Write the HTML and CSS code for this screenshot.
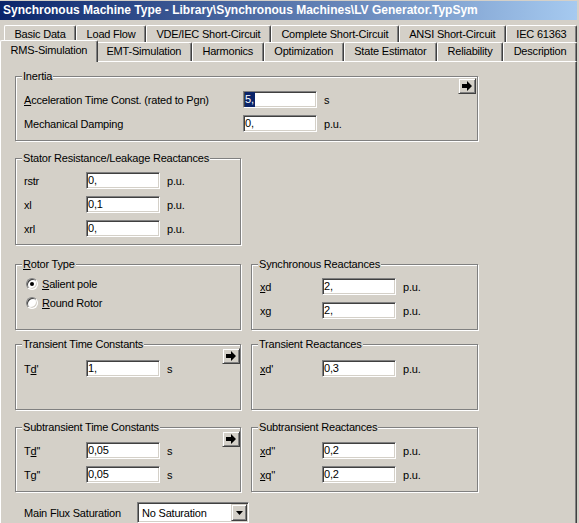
FILE: index.html
```html
<!DOCTYPE html>
<html lang="en">
<head>
    <meta charset="UTF-8">
    <title>Synchronous Machine Type</title>
    <link rel="stylesheet" href="styles.css">
</head>
<body>

<div class="window">
    <div class="titlebar">Synchronous Machine Type - Library\Synchronous Machines\LV Generator.TypSym</div>

    <div class="tabs">
        <div class="tab-row tab-row-back">
            <div class="tab">Basic Data</div>
            <div class="tab">Load Flow</div>
            <div class="tab">VDE/IEC Short-Circuit</div>
            <div class="tab">Complete Short-Circuit</div>
            <div class="tab">ANSI Short-Circuit</div>
            <div class="tab">IEC 61363</div>
        </div>
        <div class="tab-row tab-row-front">
            <div class="tab tab-active">RMS-Simulation</div>
            <div class="tab">EMT-Simulation</div>
            <div class="tab">Harmonics</div>
            <div class="tab">Optimization</div>
            <div class="tab">State Estimator</div>
            <div class="tab">Reliability</div>
            <div class="tab">Description</div>
        </div>
    </div>

    <div class="panel">
        <!-- Inertia -->
        <div class="group group-inertia">
            <span class="group-title">Inertia</span>
            <button class="arrow-btn arrow-btn-top">
                <svg width="11" height="11" viewBox="0 0 11 11"><polygon points="0,3 5,3 5,0 10,5 5,10 5,7 0,7" fill="#000"/></svg>
            </button>
            <div class="field">
                <label><u>A</u>cceleration Time Const. (rated to Pgn)</label>
                <span class="edit"><span class="selected">5,</span></span>
                <span class="unit">s</span>
            </div>
            <div class="field">
                <label>Mechanical Damping</label>
                <span class="edit">0,</span>
                <span class="unit">p.u.</span>
            </div>
        </div>

        <!-- Stator -->
        <div class="group group-stator">
            <span class="group-title">Stator Resistance/Leakage Reactances</span>
            <div class="field">
                <label>rstr</label>
                <span class="edit">0,</span>
                <span class="unit">p.u.</span>
            </div>
            <div class="field">
                <label>xl</label>
                <span class="edit">0,1</span>
                <span class="unit">p.u.</span>
            </div>
            <div class="field">
                <label>xrl</label>
                <span class="edit">0,</span>
                <span class="unit">p.u.</span>
            </div>
        </div>

        <div class="group-pair pair-sync">
            <div class="group group-rotor">
                <span class="group-title"><u>R</u>otor Type</span>
                <div class="radio">
                    <span class="radio-dot checked"></span>
                    <span><u>S</u>alient pole</span>
                </div>
                <div class="radio">
                    <span class="radio-dot"></span>
                    <span><u>R</u>ound Rotor</span>
                </div>
            </div>
            <div class="group group-sync">
                <span class="group-title">Synchronous Reactances</span>
                <div class="field">
                    <label><u>x</u>d</label>
                    <span class="edit">2,</span>
                    <span class="unit">p.u.</span>
                </div>
                <div class="field">
                    <label>xg</label>
                    <span class="edit">2,</span>
                    <span class="unit">p.u.</span>
                </div>
            </div>
        </div>

        <div class="group-pair pair-transient">
            <div class="group group-transient">
                <span class="group-title">Transient Time Constants</span>
                <button class="arrow-btn">
                    <svg width="11" height="11" viewBox="0 0 11 11"><polygon points="0,3 5,3 5,0 10,5 5,10 5,7 0,7" fill="#000"/></svg>
                </button>
                <div class="field">
                    <label>T<u>d</u>'</label>
                    <span class="edit">1,</span>
                    <span class="unit">s</span>
                </div>
            </div>
            <div class="group group-transient">
                <span class="group-title">Transient Reactances</span>
                <div class="field">
                    <label><u>x</u>d'</label>
                    <span class="edit">0,3</span>
                    <span class="unit">p.u.</span>
                </div>
            </div>
        </div>

        <div class="group-pair pair-subtransient">
            <div class="group group-subtransient">
                <span class="group-title">Subtransient Time Constants</span>
                <button class="arrow-btn">
                    <svg width="11" height="11" viewBox="0 0 11 11"><polygon points="0,3 5,3 5,0 10,5 5,10 5,7 0,7" fill="#000"/></svg>
                </button>
                <div class="field">
                    <label>T<u>d</u>''</label>
                    <span class="edit">0,05</span>
                    <span class="unit">s</span>
                </div>
                <div class="field">
                    <label>Tg''</label>
                    <span class="edit">0,05</span>
                    <span class="unit">s</span>
                </div>
            </div>
            <div class="group group-subtransient">
                <span class="group-title">Subtransient Reactances</span>
                <div class="field">
                    <label><u>x</u>d''</label>
                    <span class="edit">0,2</span>
                    <span class="unit">p.u.</span>
                </div>
                <div class="field">
                    <label><u>x</u>q''</label>
                    <span class="edit">0,2</span>
                    <span class="unit">p.u.</span>
                </div>
            </div>
        </div>

        <div class="saturation">
            <label>Main Flux Saturation</label>
            <div class="select">
                <span class="select-text">No Saturation</span>
                <span class="select-btn">
                    <svg width="7" height="4" viewBox="0 0 7 4"><polygon points="0,0 7,0 3.5,4" fill="#000"/></svg>
                </span>
            </div>
        </div>
    </div>
</div>

</body>
</html>
```

FILE: styles.css
```css
body {
    margin: 0;
    background: #d4d0c8;
    font-family: "Liberation Sans", Arial, sans-serif;
    font-size: 11px;
    letter-spacing: -0.2px;
    color: #000;
}

.window {
    width: 577px;
    height: 523px;
    overflow: hidden;
}

.titlebar {
    margin-top: 1px;
    height: 19px;
    line-height: 19px;
    padding-left: 3px;
    background: linear-gradient(to right, #0a246a, #a6caf0);
    color: #fff;
    font-size: 12px;
    font-weight: bold;
    letter-spacing: 0;
    white-space: nowrap;
}

/* Tabs */
.tabs {
    margin-top: 5px;
}

.tab-row {
    display: flex;
}

.tab-row-back {
    margin-left: 4px;
    height: 17px;
}

.tab-row-front {
    margin-left: 2px;
    height: 19px;
}

.tab {
    flex: 1 1 auto;
    padding: 0 4px;
    text-align: center;
    white-space: nowrap;
    line-height: 16px;
    background: #d4d0c8;
    border-top: 1px solid #fff;
    border-left: 1px solid #fff;
    border-right: 1px solid #404040;
    border-radius: 2px 2px 0 0;
    box-shadow: inset -1px 0 #808080;
}

.tab-row-front .tab {
    line-height: 17px;
}

.tab-row-front .tab-active {
    position: relative;
    z-index: 1;
    margin: -2px -2px 0;
    height: 21px;
    line-height: 18px;
}

/* Page */
.panel {
    height: 461px;
    padding: 14px 0 0 14px;
    border-top: 1px solid #fff;
    border-left: 1px solid #fff;
    border-right: 1px solid #404040;
    box-shadow: inset -1px 0 #808080;
}

.group {
    position: relative;
    box-sizing: border-box;
    border: 1px solid #808080;
    box-shadow: inset 1px 1px #fff, 1px 1px #fff;
}

.group-title {
    position: absolute;
    top: -7px;
    left: 6px;
    padding: 0 1px;
    line-height: 13px;
    background: #d4d0c8;
    white-space: nowrap;
}

.group-inertia {
    width: 463px;
    padding: 14px 0 8px 8px;
}

.group-stator {
    width: 226px;
    margin-top: 17px;
    padding: 13px 0 7px 8px;
}

.group-pair {
    display: grid;
    grid-template-columns: 226px 227px;
    column-gap: 10px;
}

.pair-sync {
    margin-top: 19px;
}

.pair-transient {
    margin-top: 14px;
}

.pair-subtransient {
    margin-top: 17px;
}

.group-rotor {
    padding: 11px 0 0 10px;
}

.group-sync {
    padding: 13px 0 10px 8px;
}

.group-transient {
    padding: 15px 0 32px 8px;
}

.group-subtransient {
    padding: 14px 0 8px 8px;
}

.field {
    display: flex;
    align-items: center;
    height: 17px;
}

.field + .field {
    margin-top: 7px;
}

.field label {
    flex: none;
    width: 62px;
}

.group-inertia .field label {
    width: 219px;
}

.edit {
    box-sizing: border-box;
    width: 74px;
    height: 17px;
    padding: 0 1px;
    line-height: 15px;
    background: #fff;
    border: 1px solid;
    border-color: #808080 #fff #fff #808080;
    box-shadow: inset 1px 1px #404040, inset -1px -1px #d4d0c8;
    white-space: nowrap;
}

.edit .selected {
    display: inline-block;
    padding-right: 1px;
    background: #0a246a;
    color: #fff;
}

.unit {
    margin-left: 7px;
}

/* Raised 3D buttons */
.arrow-btn,
.select-btn {
    box-sizing: border-box;
    display: flex;
    align-items: center;
    justify-content: center;
    padding: 0;
    background: #d4d0c8;
    border: 1px solid;
    border-color: #d4d0c8 #404040 #404040 #d4d0c8;
    box-shadow: inset 1px 1px #fff, inset -1px -1px #808080;
}

.arrow-btn {
    position: absolute;
    top: 3px;
    right: 0;
    width: 18px;
    height: 16px;
}

.arrow-btn-top {
    top: 1px;
    right: 1px;
}

/* Radio buttons */
.radio {
    display: flex;
    align-items: center;
    height: 16px;
}

.radio + .radio {
    margin-top: 3px;
}

.radio-dot {
    position: relative;
    box-sizing: border-box;
    width: 12px;
    height: 12px;
    margin-right: 4px;
    border-radius: 50%;
    background: #fff;
    border: 1px solid;
    border-color: #808080 #fff #fff #808080;
    box-shadow: inset 1px 1px #404040, inset -1px -1px #d4d0c8;
}

.radio-dot.checked::after {
    content: "";
    position: absolute;
    left: 3px;
    top: 3px;
    width: 4px;
    height: 4px;
    border-radius: 50%;
    background: #000;
}

/* Saturation dropdown */
.saturation {
    display: flex;
    align-items: center;
    margin-top: 10px;
    padding-left: 9px;
}

.saturation label {
    width: 113px;
}

.select {
    box-sizing: border-box;
    display: flex;
    align-items: center;
    width: 112px;
    height: 21px;
    background: #fff;
    border: 1px solid;
    border-color: #808080 #fff #fff #808080;
    box-shadow: inset 1px 1px #404040, inset -1px -1px #d4d0c8;
    padding: 1px;
}

.select-text {
    flex: 1;
    padding-left: 3px;
}

.select-btn {
    width: 16px;
    height: 17px;
}
```
